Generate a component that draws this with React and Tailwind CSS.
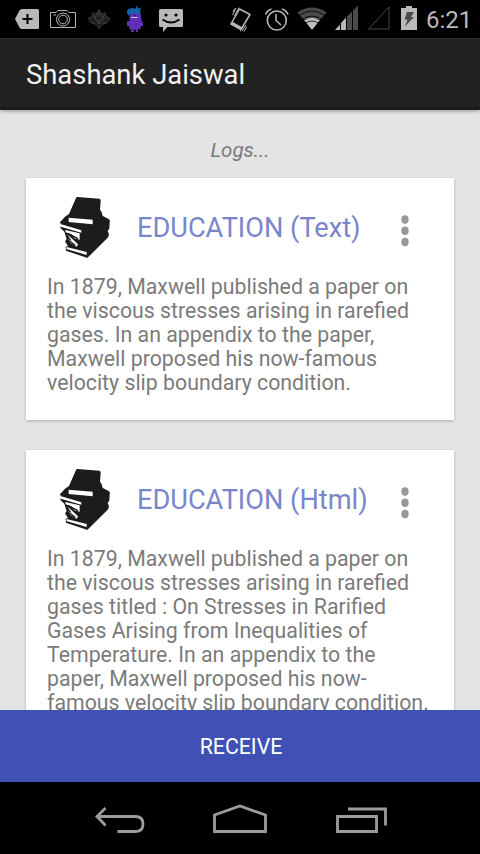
import React from "react";

const GREY = "#b9b9b9";

function StatusBar() {
  return (
    <div className="flex h-[38px] w-full shrink-0 bg-black pl-3">
      <svg className="h-[38px] w-[31px] shrink-0" viewBox="12 0 31 38">
        <path d="M22 9H37.500Q39 9 39 10.500V27.500Q39 29 37.500 29H22Q20.500 29 19.500 27.500L15 19L19.500 10.500Q20.500 9 22 9Z" fill={GREY} />
        <path d="M27.500 14V24M22.500 19H32.500" stroke="#050505" strokeWidth="2.200" />
      </svg>
      <svg className="h-[38px] w-[38px] shrink-0" viewBox="43 0 38 38" fill="none" stroke={GREY} strokeWidth="1">
        <path d="M50.500 12.500H56L58 10.500H67L69 12.500H75.500V27.500H50.500Z" />
        <circle cx="63" cy="19.500" r="6.500" />
        <circle cx="63" cy="19.500" r="4.300" />
        <path d="M53.500 15H56" />
      </svg>
      <svg className="h-[38px] w-[38px] shrink-0" viewBox="81 0 38 38">
        <path d="M99 9L102 13L106 12V15L110 18L109 22L103 25L99 29L95 25L89 22L88 18L92 15V12L96 13Z" fill="#252525" />
        <path d="M88 18L93 20L99 11L105 20L110 18M92 13L99 24L106 13M91 23H107M99 9V29" stroke="#3b3b3b" strokeWidth="1" fill="none" />
        <path d="M90 20H94M97 18H101M104 20H108M95 22L99 26L103 22" stroke="#070707" strokeWidth="1" fill="none" />
      </svg>
      <svg className="h-[38px] w-[34px] shrink-0" viewBox="119 0 34 38">
        <path d="M129.500 14Q130 12.500 135 12.500T141 15L141.300 20L143 23V26H141L140.500 29H138V32H135.800V29.500H133.800V32H131V29H129.200V26H127V21H129.500Z" fill="#5f2fb4" />
        <path d="M127 12Q127 8 131 8.500Q133 7.500 135 9L137 5.500L138 8.500L141 7.500L140 11L141 15L137 13.500H130L128 16Z" fill="#1264b0" />
        <path d="M131 17.500H138" stroke="#d5b9e0" strokeWidth="1" />
        <path d="M134.500 14.500V16" stroke="#180b38" strokeWidth="1.200" />
      </svg>
      <svg className="h-[38px] w-[36px] shrink-0" viewBox="153 0 36 38">
        <path d="M160.500 9H181.500Q183 9 183 10.500V25.500Q183 27 181.500 27H167.500L163 32V27H160.500Q159 27 159 25.500V10.500Q159 9 160.500 9Z" fill={GREY} />
        <path d="M162.500 19.500Q171 25.500 179.500 19.500" stroke="#050505" strokeWidth="2" fill="none" />
        <circle cx="166" cy="15" r="1.600" fill="#050505" />
        <circle cx="176" cy="15" r="1.600" fill="#050505" />
      </svg>
      <div className="grow" />
      <svg className="h-[38px] w-[32px] shrink-0" viewBox="226 0 32 38" fill="none" stroke={GREY}>
        <path d="M239.500 9L250 14.500L241 29.500L231 24Z" strokeWidth="1.500" strokeLinejoin="round" />
        <path d="M231.300 22.800L241.500 28.500" strokeWidth="3" />
        <path d="M232.500 15L236 8M234.500 16L239 7.500M233 12L235 8.500M242 31L246 25M244 31.500L246.500 27M240 31H241" strokeWidth="1" />
      </svg>
      <svg className="h-[38px] w-[36px] shrink-0" viewBox="258 0 36 38" fill="none" stroke={GREY} strokeWidth="1.600">
        <circle cx="276.800" cy="20.500" r="9.500" />
        <path d="M276 14V20.500L281 25" strokeWidth="1.500" />
        <path d="M265.500 14.500Q267 10.500 271.500 9M288 14.500Q286.500 10.500 282 9" strokeWidth="1.600" />
      </svg>
      <svg className="h-[38px] w-[38px] shrink-0" viewBox="294 0 38 38">
        <path d="M312 29.700L297.500 12.500Q312 2.500 326.500 12.500Z" fill="#4b4b4b" />
        <path d="M312 29.700L304.500 20.500Q312 15 319.500 20.500Z" fill="#c0c0c0" />
        <path d="M299 15.500Q312 6.500 325 15.500M302 19.500Q312 12.500 322 19.500M305 23.500Q312 18.500 319 23.500" stroke="#000" strokeWidth="0.800" fill="none" />
      </svg>
      <svg className="h-[38px] w-[32px] shrink-0" viewBox="332 0 32 38">
        <path d="M335 30L340 24.500V30Z" fill={GREY} />
        <path d="M341 23L346 17.500V30H341Z" fill={GREY} />
        <path d="M347 16.500L352 11.500V30H347ZM353 10.500L358 5.500V30H353Z" fill="#4b4b4b" />
      </svg>
      <svg className="h-[38px] w-[32px] shrink-0" viewBox="364 0 32 38">
        <path d="M368.500 29L389 7V29Z" fill="none" stroke="#474747" strokeWidth="1" />
      </svg>
      <svg className="h-[38px] w-[30px] shrink-0" viewBox="396 0 30 38">
        <path d="M406 6H412V8H417V30H401V8H406Z" fill={GREY} />
        <path d="M407 12H414L411 17H414L405 26.500L407.500 19.500H404.500Z" fill="#4a4a4a" />
      </svg>
      <span className="w-[54px] shrink-0 whitespace-nowrap pt-[2px] text-[24px] leading-[36px] text-[#b9b9b9]">6:21</span>
    </div>
  );
}

function BooksIcon() {
  return (
    <svg className="h-[65px] w-[57px] shrink-0" viewBox="111 75 171 195">
      <path
        d="M169 82Q168 81 173 81L238 86Q243 88 242 94L240 119Q247 125 248 138L266 147Q271 151 269 158L268 176L263 183L266 190Q268 197 263 203L204 262Q201 265 196 262L138 242L137 230L144 229L135 214L140 208L133 185L121 174L124 162L119 158L135 140L147 132Z"
        fill="#1c1d1b"
      />
      <path d="M146 143L218 149V163L146 156Z" fill="#fff" />
      <path d="M124 163L184 181V188L122 170Z" fill="#fff" />
      <path d="M136 180L179 190V209L163 205L154 193L137 187Z" fill="#fff" />
      <path d="M142 193L174 223L170 230L153 220L139 205L155 213Z" fill="#fff" />
      <path d="M140 231L200 246V255L139 237Z" fill="#fff" />
      <path d="M143 190L174 206M140 207L166 226" stroke="#1c1d1b" strokeWidth="4" />
    </svg>
  );
}

function Card({ title, lines }) {
  return (
    <section className="mx-[26px] shrink-0 rounded-[1px] bg-white pb-[25px] shadow-[0_1px_3px_rgba(0,0,0,0.25)]">
      <header className="flex h-[97px] items-start pl-[31px] pt-[17px]">
        <BooksIcon />
        <h2 className="ml-[23px] w-[263px] shrink-0 whitespace-nowrap pt-[15px] text-[27.2px] font-normal leading-[36px] text-[#7986cb]">{title}</h2>
        <svg className="mt-[19px] h-[34px] w-[10px] shrink-0" viewBox="0 0 10 34">
          <ellipse cx="5" cy="5.500" rx="3.700" ry="4.200" fill="#999" />
          <ellipse cx="5" cy="16.800" rx="3.700" ry="4.200" fill="#999" />
          <ellipse cx="5" cy="28" rx="3.700" ry="4.200" fill="#999" />
        </svg>
      </header>
      <div className="pl-[21px] text-[21.3px] leading-[24px] text-[#7b7b7b]">
        {lines.map((line) => (
          <p key={line} className="whitespace-nowrap">{line}</p>
        ))}
      </div>
    </section>
  );
}

const textLog = [
  "In 1879, Maxwell published a paper on",
  "the viscous stresses arising in rarefied",
  "gases. In an appendix to the paper,",
  "Maxwell proposed his now-famous",
  "velocity slip boundary condition.",
];

const htmlLog = [
  "In 1879, Maxwell published a paper on",
  "the viscous stresses arising in rarefied",
  "gases titled : On Stresses in Rarified",
  "Gases Arising from Inequalities of",
  "Temperature. In an appendix to the",
  "paper, Maxwell proposed his now-",
  "famous velocity slip boundary condition.",
];

export default function App() {
  return (
    <div className="flex h-[854px] w-[480px] flex-col overflow-hidden bg-[#e4e4e4] font-[Roboto,sans-serif]">
      <StatusBar />
      <div className="z-10 flex h-[72px] shrink-0 items-center border-b-[3px] border-t border-b-[#1b1b1b] border-t-[#303030] bg-[#222] pl-[26px] shadow-[0_1px_4px_rgba(0,0,0,0.35)]">
        <h1 className="whitespace-nowrap pt-[4px] text-[27.4px] font-normal leading-[36px] text-[#f1f1f1]">Shashank Jaiswal</h1>
      </div>
      <main className="flex h-[600px] shrink-0 flex-col overflow-hidden">
        <p className="mb-[13px] h-[55px] shrink-0 pt-[27px] text-center text-[20.5px] italic leading-[26px] text-[#7b7b7b]">Logs...</p>
        <Card title="EDUCATION (Text)" lines={textLog} />
        <div className="h-[30px] shrink-0" />
        <Card title="EDUCATION (Html)" lines={htmlLog} />
      </main>
      <button className="h-[72px] shrink-0 bg-[#3f51b5] pl-[2px] pt-[1px] text-[21.3px] leading-[72px] text-white">RECEIVE</button>
      <nav className="flex h-[72px] shrink-0 bg-black">
        <svg className="ml-[80px] h-[72px] w-[80px] shrink-0" viewBox="80 782 80 72" fill="none" stroke="#9c9c9c" strokeWidth="2.800">
          <path d="M97 816.500H135.500Q143 816.500 143 824T135.500 831.500H117.500M105.500 808L97 816.500L105.500 825.500" />
        </svg>
        <svg className="ml-[40px] h-[72px] w-[80px] shrink-0" viewBox="200 782 80 72" fill="none" stroke="#9c9c9c" strokeWidth="2.800">
          <path d="M214.500 831.500V815L240 806L265.500 815V831.500Z" />
        </svg>
        <svg className="ml-[40px] h-[72px] w-[80px] shrink-0" viewBox="320 782 80 72" fill="none" stroke="#9c9c9c" strokeWidth="2.800">
          <path d="M337.500 816.500H376.500V831.500H337.500ZM348 809H385.500V825.500" />
        </svg>
      </nav>
    </div>
  );
}
